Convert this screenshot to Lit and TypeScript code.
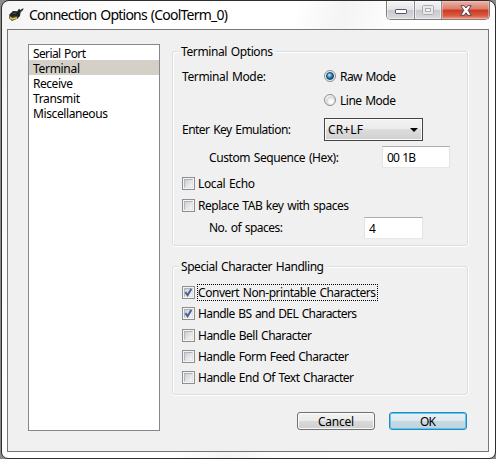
import { LitElement, html, css } from "lit";
import { customElement, property } from "lit/decorators.js";

/* Text run tracked out or in to a given advance width. */
@customElement("fit-text")
class FitText extends LitElement {
  @property({ type: Number }) w = 0;
  @property() text = "";
  static styles = css`
    :host { display: inline-block; white-space: pre; flex: none; word-spacing: 1px; }
  `;
  render() {
    return html`<span>${this.text}</span>`;
  }
  firstUpdated() {
    const span = this.renderRoot.querySelector("span")!;
    const natural = span.getBoundingClientRect().width;
    if (this.w) {
      span.style.letterSpacing = `${(this.w - natural) / (this.text.length - 1)}px`;
      this.style.width = `${this.w}px`;
    }
  }
}

const t = (text: string, w: number) => html`<fit-text .text=${text} .w=${w}></fit-text>`;

@customElement("check-row")
class CheckRow extends LitElement {
  @property({ type: Boolean }) checked = false;
  @property({ type: Boolean }) focused = false;
  @property() label = "";
  @property({ type: Number }) w = 0;
  static styles = css`
    :host { display: flex; align-items: center; height: 13px; }
    .box {
      flex: none; box-sizing: border-box; width: 13px; height: 13px;
      border: 1px solid #8e8f8f; background: #f4f4f4; padding: 1px;
    }
    .well {
      box-sizing: border-box; width: 9px; height: 9px; border: 1px solid;
      border-color: #aeb3b9 #e0e1e3 #e5e6e7 #b4b8bd;
      background: linear-gradient(135deg, #cbcfd5, #f6f6f6);
    }
    svg { display: block; overflow: visible; margin: -1px; }
    .label { margin-left: 2px; padding: 0 1px 0 0; height: 17px; line-height: 17px; border: solid transparent; border-width: 0 1px; box-sizing: border-box; }
    .focused { outline: 1px dotted #000; outline-offset: -1px; }
  `;
  render() {
    return html`
      <div class="box"><div class="well">
        ${this.checked
          ? html`<svg width="9" height="9" viewBox="0 0 9 9"><path d="M1.4 4.2L3.6 7.2L7.3 1" fill="none" stroke="#4a5f97" stroke-width="2"/></svg>`
          : ""}
      </div></div>
      <div class="label ${this.focused ? "focused" : ""}">${t(this.label, this.w)}</div>
    `;
  }
}

@customElement("app-root")
class AppRoot extends LitElement {
  static styles = css`
    :host {
      display: block; width: 496px; height: 459px; overflow: hidden; background: #8a8a8a;
      font: 12px "Noto Sans", "Open Sans", sans-serif; color: #000;
    }
    * { box-sizing: border-box; }
    .window {
      width: 495px; height: 459px; margin-left: 1px; border: 1px solid #2e2e30; border-radius: 8px 8px 7px 7px;
      background: linear-gradient(105deg, #f4f4f4 0, #fff 22%, #fff 48%, #f4f4f4 56%, #fdfdfd 64%, #fff 100%);
      padding: 0 6px 0 5px; display: flex; flex-direction: column;
    }
    .titlebar { display: flex; height: 28px; flex: none; }
    .appicon { margin: 5px 0 0 1px; flex: none; }
    .title { font-size: 14px; line-height: 27px; margin-left: 5px; flex: 1; }
    .controls { display: flex; height: 19px; border: 1px solid #7b7b80; border-top: 0; border-radius: 0 0 5px 5px; overflow: hidden; width: 104px; margin-right: -1px; }
    .ctl { display: flex; align-items: center; justify-content: center; background: linear-gradient(#f6f6f7, #e3e3e6 48%, #c9c9cd 52%, #dcdce0); box-shadow: inset 0 0 0 1px #ffffff80; }
    .min { width: 28px; border-right: 1px solid #8b8b90; padding-top: 2px; }
    .max { width: 27px; border-right: 1px solid #8b8b90; }
    .close { flex: 1; background: linear-gradient(#eab5aa, #dc7b69 45%, #c73a20 50%, #d9573e 80%, #ee9882); box-shadow: inset 0 0 0 1px #ffc9bb80; }
    .client { border: 1px solid #767676; width: 482px; height: 423px; background: #f0f0f0; display: flex; padding: 14px 20px 0; }
    .list { width: 132px; height: 387px; border: 1px solid #828790; background: #fff; flex: none; }
    .item { height: 15px; line-height: 17px; padding-left: 4px; }
    .item.sel { background: #d4d0c8; }
    .main { margin-left: 12px; width: 296px; flex: none; }
    .group { border: 1px solid #d5dfe5; border-radius: 3px; box-shadow: inset 1px 1px #fff, 0 1px #fff, 1px 0 #fff; padding-left: 9px; }
    .g1 { margin-top: 7px; height: 195px; }
    .g2 { margin-top: 20px; height: 129px; }
    .legend { display: flex; width: max-content; height: 16px; line-height: 16px; margin: -8px 0 0 -3px; padding: 0 3px 0 2px; background: #f0f0f0; }
    .row { display: flex; align-items: center; }
    .grow { display: flex; align-items: center; flex: none; }
    .custom { width: 173px; }
    .count { width: 155px; }
    .r1 { height: 24px; margin-top: 4px; }
    .r2 { height: 24px; padding-left: 142px; }
    .r3 { height: 23px; margin-top: 6px; }
    .r4 { height: 22px; margin-top: 5px; padding-left: 27px; }
    .r5 { margin-top: 9px; }
    .r6 { margin-top: 9px; }
    .r7 { height: 22px; margin-top: 5px; padding-left: 27px; }
    .r7 .grow { padding-bottom: 2px; }
    .lead { width: 142px; flex: none; }
    .radio { width: 12px; height: 12px; border-radius: 50%; border: 1px solid #8e8f8f; margin-right: 4px; background: radial-gradient(circle at 60% 65%, #fafafa 0 20%, #cfd3d8 55%, #f2f2f2 60%); display: flex; align-items: center; justify-content: center; }
    .radio.on { background: #e8edf0; }
    .dot { width: 8px; height: 8px; border-radius: 50%; border: 1px solid #163450; background: radial-gradient(circle at 38% 32%, #c8f1fc 0, #39a5d4 35%, #0d4e80 80%); }
    .combo { width: 99px; height: 23px; border: 1px solid #444; box-shadow: inset 0 0 0 1px #fafafa; background: linear-gradient(#f2f2f2, #ebebeb 49%, #dddddd 50%, #cfcfcf); display: flex; align-items: center; justify-content: space-between; padding: 0 4px 0 3px; }
    .field { height: 22px; border: 1px solid; border-color: #abadb3 #e2e3ea #e3e9ef #e2e3ea; background: #fff; padding-left: 4px; line-height: 21px; }
    .wide { width: 68px; }
    .narrow { width: 59px; }
    .checks { padding-top: 11px; }
    .c2 { margin-top: 8px; }
    .c3 { margin-top: 9px; }
    .buttons { display: flex; gap: 14px; justify-content: flex-end; margin-top: 17px; padding-right: 1px; }
    .btn { width: 78px; height: 18px; border: 1px solid #707070; border-radius: 3px; box-shadow: inset 0 0 0 1px #fbfbfb; background: linear-gradient(#f2f2f2, #ebebeb 49%, #dadada 50%, #cfcfcf); display: flex; justify-content: center; line-height: 17px; }
    .ok { border-color: #3c7fb1; box-shadow: inset 0 0 0 1px #44d0f8; background: linear-gradient(#eaf2f6, #dce8ee 49%, #c8d9e2 50%, #bfd2de); }
  `;
  render() {
    return html`
      <div class="window">
        <div class="titlebar">
          <svg class="appicon" width="16" height="16" viewBox="0 0 16 16">
            <path d="M15.5 2L12.5 4L11 2.8L9.3 5.2L5 5L1.2 8.8L3 13.5L9.5 12.5L12 10L12.5 6.5L15 4Z" fill="#1c241f"/>
            <path d="M1.5 8.8L3.5 11L9 10L9.8 12.5L4 15L1 12.3Z" fill="#5d5522"/>
            <path d="M2 11.5L4.3 13L9 11.7" stroke="#d8c45d" stroke-width="1.5" fill="none"/>
            <path d="M4.5 7.5L8 7.2M12 5.5L14 3.6" stroke="#48554c" fill="none"/>
          </svg>
          <div class="title">${t("Connection Options (CoolTerm_0)", 199)}</div>
          <div class="controls">
            <div class="ctl min">
              <svg width="14" height="8" viewBox="0 0 14 8"><rect x="1.5" y="2.5" width="11" height="4" rx=".6" fill="#fff" stroke="#52566b"/></svg>
            </div>
            <div class="ctl max">
              <svg width="12" height="10" viewBox="0 0 12 10"><rect x=".5" y=".5" width="11" height="9" rx="1" fill="#e9e9eb" stroke="#adadb1"/><rect x="3.5" y="3.5" width="5" height="3" fill="#f2f2f2" stroke="#adadb1"/></svg>
            </div>
            <div class="ctl close">
              <svg width="12" height="11" viewBox="0 0 12 11"><path d="M.8 .7H4.2L6 3L7.8 .7H11.2L8.2 5.3L11.2 10.3H7.8L6 7.8L4.2 10.3H.8L3.8 5.3Z" fill="#fff" stroke="#50485a" stroke-linejoin="round"/></svg>
            </div>
          </div>
        </div>
        <div class="client">
          <div class="list">
            <div class="item">${t("Serial Port", 53)}</div>
            <div class="item sel">${t("Terminal", 47)}</div>
            <div class="item">${t("Receive", 40)}</div>
            <div class="item">${t("Transmit", 47)}</div>
            <div class="item">${t("Miscellaneous", 75)}</div>
          </div>
          <div class="main">
            <div class="group g1">
              <div class="legend">${t("Terminal Options", 92)}</div>
              <div class="row r1"><div class="lead">${t("Terminal Mode:", 84)}</div><div class="radio on"><div class="dot"></div></div>${t("Raw Mode", 56)}</div>
              <div class="row r2"><div class="radio"></div>${t("Line Mode", 56)}</div>
              <div class="row r3"><div class="lead">${t("Enter Key Emulation:", 109)}</div>
                <div class="combo">${t("CR+LF", 35)}<svg width="8" height="4" viewBox="0 0 8 4"><path d="M0 0H8L4 4Z" fill="#000"/></svg></div>
              </div>
              <div class="row r4"><div class="grow custom">${t("Custom Sequence (Hex):", 130)}</div><div class="field wide">${t("00 1B", 29)}</div></div>
              <check-row class="r5" label="Local Echo" w="57"></check-row>
              <check-row class="r6" label="Replace TAB key with spaces" w="151"></check-row>
              <div class="row r7"><div class="grow count">${t("No. of spaces:", 74)}</div><div class="field narrow">4</div></div>
            </div>
            <div class="group g2">
              <div class="legend">${t("Special Character Handling", 143)}</div>
              <div class="checks">
                <check-row checked focused label="Convert Non-printable Characters" w="178"></check-row>
                <check-row class="c2" checked label="Handle BS and DEL Characters" w="159"></check-row>
                <check-row class="c3" label="Handle Bell Character" w="114"></check-row>
                <check-row class="c2" label="Handle Form Feed Character" w="151"></check-row>
                <check-row class="c2" label="Handle End Of Text Character" w="156"></check-row>
              </div>
            </div>
            <div class="buttons">
              <div class="btn">${t("Cancel", 36)}</div>
              <div class="btn ok">${t("OK", 16)}</div>
            </div>
          </div>
        </div>
      </div>
    `;
  }
}
